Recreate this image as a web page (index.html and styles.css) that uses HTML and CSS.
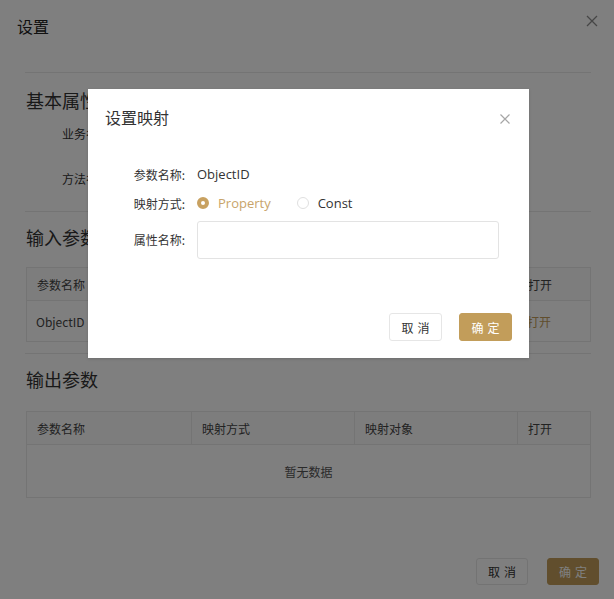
FILE: index.html
```html
<!DOCTYPE html>
<html lang="zh">
<head>
<meta charset="utf-8">
<title>设置</title>
<link rel="stylesheet" href="styles.css">
</head>
<body>
<div class="page">
  <header class="page-head">
    <h1 class="page-title">设置</h1>
    <span class="page-close">
      <svg width="12" height="12" viewBox="0 0 12 12"><path d="M1 1L11 11M11 1L1 11" stroke="#8c8c8c" stroke-width="1.3" fill="none"/></svg>
    </span>
  </header>
  <div class="content">
    <section class="sec sec-basic">
      <h2 class="sec-title">基本属性</h2>
      <div class="fields">
        <div class="field">业务名称：</div>
        <div class="field">方法名称：</div>
      </div>
    </section>
    <section class="sec">
      <h2 class="sec-title">输入参数</h2>
      <div class="table">
        <div class="tr th">
          <div class="td">参数名称</div>
          <div class="td">映射方式</div>
          <div class="td">映射对象</div>
          <div class="td">打开</div>
        </div>
        <div class="tr row">
          <div class="td">ObjectID</div>
          <div class="td"></div>
          <div class="td"></div>
          <div class="td link">打开</div>
        </div>
      </div>
    </section>
    <section class="sec sec-out">
      <h2 class="sec-title">输出参数</h2>
      <div class="table">
        <div class="tr th">
          <div class="td">参数名称</div>
          <div class="td">映射方式</div>
          <div class="td">映射对象</div>
          <div class="td">打开</div>
        </div>
        <div class="empty">暂无数据</div>
      </div>
    </section>
    <footer class="page-foot">
      <button class="btn btn-default">取消</button>
      <button class="btn btn-primary">确定</button>
    </footer>
  </div>
</div>

<div class="mask"></div>

<div class="modal">
  <div class="modal-head">
    <h3 class="modal-title">设置映射</h3>
    <span class="modal-close">
      <svg width="10" height="10" viewBox="0 0 10 10"><path d="M0.5 0.5L9.5 9.5M9.5 0.5L0.5 9.5" stroke="#a6a6a6" stroke-width="1.2" fill="none"/></svg>
    </span>
  </div>
  <div class="modal-body">
    <div class="form">
      <label class="lbl r1">参数名称:</label>
      <div class="val r1 text">ObjectID</div>
      <label class="lbl r2">映射方式:</label>
      <div class="val r2 radios">
        <span class="radio checked"><i class="dot"></i>Property</span>
        <span class="radio"><i class="dot"></i>Const</span>
      </div>
      <label class="lbl r3">属性名称:</label>
      <div class="val r3"><input class="input" type="text"></div>
    </div>
  </div>
  <div class="modal-foot">
    <button class="btn btn-default">取消</button>
    <button class="btn btn-primary">确定</button>
  </div>
</div>
</body>
</html>
```

FILE: styles.css
```css
* { box-sizing: border-box; }
html, body {
  margin: 0;
  padding: 0;
  background: #ffffff;
  font-family: "Noto Sans CJK SC", "Open Sans", sans-serif;
  color: #333;
}
body { width: 614px; height: 599px; overflow: hidden; position: relative; }

.page-head {
  height: 72px;
  display: flex;
  align-items: flex-start;
  justify-content: space-between;
  padding: 14px 16px 0 17px;
}
.page-title {
  margin: 0;
  font-size: 16px;
  line-height: 24px;
  font-weight: 400;
  color: #222;
}
.page-close { display: flex; padding-top: 1px; padding-right: 0; }

.content { padding: 0 23px 0 25px; }
.sec { border-top: 1px solid #e8e8e8; }
.sec-title {
  margin: 15px 0 0 1px;
  font-size: 18px;
  line-height: 24px;
  font-weight: 400;
  color: #333;
}
.sec-basic { height: 139px; }
.fields { margin: 10px 0 0 37px; display: flex; flex-direction: column; gap: 21px; }
.field { font-size: 12px; line-height: 24px; color: #333; }

.sec + .sec .sec-title { margin-top: 13px; }
.table {
  margin: 18px 0 11px 1px;
  border: 1px solid #e8e8e8;
  font-size: 12px;
  color: #444;
}
.sec-out .table { margin-top: 20px; }
.tr {
  display: grid;
  grid-template-columns: 165px 163px 163px 1fr;
}
.th { height: 33px; border-bottom: 1px solid #e8e8e8; background: #fafafa; }
.th .td { border-right: 1px solid #e8e8e8; }
.th .td:last-child { border-right: none; }
.td { display: flex; align-items: center; padding-left: 10px; }
.row { height: 40px; }
.row .td { padding-left: 9px; }
.link { color: #c29d5a; }
.empty { height: 52px; display: flex; align-items: center; justify-content: center; color: #555; }

.page-foot {
  margin-top: 60px;
  display: flex;
  justify-content: flex-end;
  gap: 19px;
  margin-right: -8px;
}

.btn {
  width: 53px;
  height: 28px;
  border-radius: 3px;
  font-family: "Noto Sans CJK SC", sans-serif;
  font-size: 12px;
  letter-spacing: 4px;
  padding: 0 0 0 4px;
  cursor: pointer;
}
.btn-default { background: #fff; border: 1px solid #e6e6e6; color: #333; }
.btn-primary { background: #c29d5a; border: 1px solid #c29d5a; color: #fff; }
.page-foot .btn { width: 52px; height: 27px; }

.mask {
  position: absolute;
  inset: 0;
  background: rgba(0, 0, 0, 0.5);
}

.modal {
  position: absolute;
  left: 88px;
  top: 89px;
  width: 441px;
  height: 269px;
  background: #fff;
  display: flex;
  flex-direction: column;
  box-shadow: 0 1px 3px rgba(0, 0, 0, 0.15);
}
.modal-head {
  height: 58px;
  display: flex;
  justify-content: space-between;
  align-items: flex-start;
  padding: 16px 19px 0 17px;
}
.modal-title {
  margin: 0;
  font-size: 16px;
  line-height: 24px;
  font-weight: 400;
  color: #333;
}
.modal-close { display: flex; padding-top: 9px; }
.modal-body { padding: 15px 30px 0 0; }
.form {
  display: grid;
  grid-template-columns: 97px 1fr;
  grid-template-rows: 24px 24px 38px;
  column-gap: 12px;
  row-gap: 5px;
}
.form .r3 { margin-top: 1px; }
.lbl {
  font-size: 12px;
  color: #333;
  text-align: right;
  display: flex;
  align-items: center;
  justify-content: flex-end;
}
.val { display: flex; align-items: center; }
.text { font-family: "Open Sans", "Noto Sans CJK SC", sans-serif; font-size: 13px; color: #333; }
.radios { gap: 26px; font-family: "Open Sans", sans-serif; font-size: 13px; }
.radio { display: inline-flex; align-items: center; gap: 9px; color: #333; }
.radio.checked { color: #c8a46a; }
.dot {
  width: 12px;
  height: 12px;
  border-radius: 50%;
  border: 1px solid #e0e0e0;
  background: #fff;
  display: inline-block;
}
.radio.checked .dot { border: 4px solid #c8a160; }
.input {
  width: 302px;
  height: 38px;
  border: 1px solid #e3e3e3;
  border-radius: 3px;
  outline: none;
  padding: 0 10px;
}
.modal-foot {
  margin-top: auto;
  display: flex;
  justify-content: flex-end;
  gap: 17px;
  padding: 0 17px 17px 0;
}
```
